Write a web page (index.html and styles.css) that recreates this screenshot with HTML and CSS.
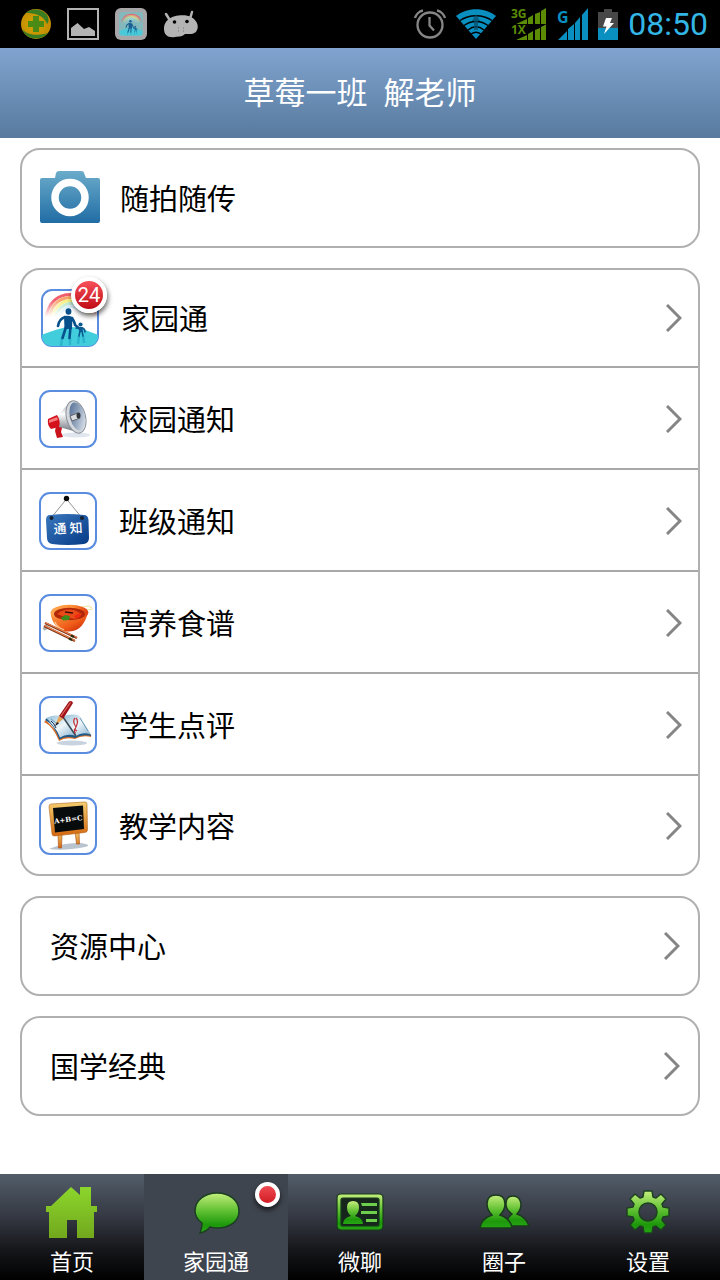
FILE: index.html
```html
<!DOCTYPE html>
<html lang="zh-CN">
<head>
<meta charset="utf-8">
<meta name="viewport" content="width=device-width, initial-scale=1">
<title>家园通</title>
<link rel="stylesheet" href="styles.css">
</head>
<body>
<svg class="defs" aria-hidden="true">
  <defs>
    <linearGradient id="green" x1="0" y1="0" x2="0" y2="1"><stop offset="0" stop-color="#c4ee7c"/><stop offset=".45" stop-color="#5fc032"/><stop offset=".8" stop-color="#1d980b"/><stop offset="1" stop-color="#27a514"/></linearGradient>
    <linearGradient id="house" x1="0" y1="0" x2="0" y2="1"><stop offset="0" stop-color="#8cd62c"/><stop offset="1" stop-color="#72a81d"/></linearGradient>
    <linearGradient id="camera" x1="0" y1="0" x2="0" y2="1"><stop offset="0" stop-color="#6bacca"/><stop offset="1" stop-color="#206ca5"/></linearGradient>
    <linearGradient id="fade" x1="0" y1="0" x2="0" y2="1"><stop offset="0" stop-color="#fff"/><stop offset=".4" stop-color="#fff"/><stop offset="1" stop-color="#000"/></linearGradient>
    <linearGradient id="board" x1="0" y1="0" x2="1" y2="1"><stop offset="0" stop-color="#3a78be"/><stop offset="1" stop-color="#063a86"/></linearGradient>
    <linearGradient id="bowl" x1="0" y1="0" x2="1" y2="1"><stop offset="0" stop-color="#ffa04a"/><stop offset=".6" stop-color="#ef5b18"/><stop offset="1" stop-color="#c01c04"/></linearGradient>
    <linearGradient id="rim" x1="0" y1="0" x2="1" y2="0"><stop offset="0" stop-color="#ffa850"/><stop offset=".6" stop-color="#ff8c34"/><stop offset="1" stop-color="#e03c10"/></linearGradient>
    <linearGradient id="horn" x1="0" y1="0" x2="1" y2="1"><stop offset="0" stop-color="#4a6690"/><stop offset=".5" stop-color="#93a5bd"/><stop offset="1" stop-color="#f2f5f8"/></linearGradient>
    <linearGradient id="cone" x1="0" y1="0" x2="0" y2="1"><stop offset="0" stop-color="#9aa0a8"/><stop offset=".4" stop-color="#fff"/><stop offset="1" stop-color="#6d747e"/></linearGradient>
    <linearGradient id="page" x1="0" y1="0" x2="1" y2="1"><stop offset="0" stop-color="#8fbcd6"/><stop offset=".5" stop-color="#eef6fa"/><stop offset="1" stop-color="#86b0ce"/></linearGradient>
    <linearGradient id="wood" x1="0" y1="0" x2="0" y2="1"><stop offset="0" stop-color="#f3cf70"/><stop offset="1" stop-color="#d3660f"/></linearGradient>
    <radialGradient id="ball" cx=".45" cy=".5" r=".55"><stop offset="0" stop-color="#d0a800"/><stop offset="1" stop-color="#c38a04"/></radialGradient>
    <mask id="rainbowMask"><rect width="58" height="28" fill="url(#fade)"/></mask>
    <clipPath id="tileClip"><rect x="1" y="1" width="56" height="56" rx="9"/></clipPath>
    <symbol id="family" viewBox="0 0 58 58">
      <g clip-path="url(#tileClip)">
        <g fill="none" stroke-width="3" mask="url(#rainbowMask)">
          <path d="M5 30C7 12 18 5 31 5.500S53 12 55 30" stroke="#f0606c"/>
          <path d="M8 30C10 15 20 8 31 8.500S50 15 52 30" stroke="#f9a66c"/>
          <path d="M11 30C13 18 22 11 31 11.500S47 18 49 30" stroke="#f5ef7c"/>
          <path d="M14 30C16 21 23 14 31 14.500S44 21 46 30" stroke="#b4e4c4"/>
          <path d="M17 30C19 24 25 17 31 17.500S41 24 43 30" stroke="#c0e3f8"/>
        </g>
        <path d="M0 46C9 43 20 38 30 38S48 43 58 46V58H0Z" fill="#42cddd"/>
        <path d="M21 49L20 57M29 49L29 56M38 47L37 55M42 47L43 54" stroke="#1fa6c4" stroke-width="2.500" opacity=".6"/>
        <ellipse cx="27.500" cy="22.500" rx="2.900" ry="3.300" fill="#07508c"/>
        <path d="M23 27Q27.500 26 31.500 28L31 40H23.500Z" fill="#07508c"/>
        <path d="M24 28Q18 30 17 37M31 29Q34 34 34 36L39 40M25 38L21.500 49M29.500 38L28.500 49" fill="none" stroke="#07508c" stroke-width="2.600" stroke-linecap="round"/>
        <circle cx="39.500" cy="35.500" r="2.100" fill="#0a5a92"/>
        <path d="M38 38H42L41.500 43H38.500Z" fill="#0a5a92"/>
        <path d="M38.500 39.500L35 39M41.500 39Q44 40 44 43M39 42L38 47M41 42L42 47" fill="none" stroke="#0a5a92" stroke-width="1.600" stroke-linecap="round"/>
      </g>
    </symbol>
  </defs>
</svg>

<div class="statusbar">
  <div class="notices">
    <svg width="32" height="32" viewBox="0 0 32 32" aria-hidden="true"><circle cx="16" cy="16" r="15" fill="url(#ball)"/><path d="M6 5C12 -1 23 1 27 7 29 10 29 14 27 16 24 7 14 5 6 5ZM2 21C9 29 20 27 28 25 21 33 7 33 2 21Z" fill="#397c22"/><path d="M13 8h6v5h5v6h-5v5h-6v-5H8v-6h5z" fill="#4c8a16"/></svg>
    <svg width="32" height="32" viewBox="0 0 32 32" aria-hidden="true"><path d="M1 1H31V31H1Z" fill="none" stroke="#b4b4b4" stroke-width="2"/><path d="M4 28V20L10.500 15 17 21 22 19 28 23V28Z" fill="#b4b4b4"/></svg>
    <svg width="34" height="34" viewBox="0 0 34 34" aria-hidden="true"><rect x="1" y="1" width="32" height="32" rx="6" fill="#a7a7a9"/><rect x="5" y="5" width="24" height="24" rx="2" fill="#83b8bd"/><use href="#family" x="5" y="5" width="24" height="24" opacity=".85"/></svg>
    <svg width="36" height="28" viewBox="0 0 36 28" aria-hidden="true"><path d="M3 4L8 12M29 2L27 9" stroke="#b4b4b4" stroke-width="2.500" stroke-linecap="round"/><path d="M6 9C10 5 23 4 28 7 34 10 36 16 34 20 32 25 26 24 22 24 18 28 14 26 12 27 5 28 1 25 1 19 1 14 3 11 6 9Z" fill="#b4b4b4"/><circle cx="11.500" cy="12" r="1.800"/><circle cx="24" cy="11.500" r="1.800"/><path d="M15 18h1m4 0h1m-6 3h1m4 0h1" stroke="#777"/></svg>
  </div>
  <div class="signals">
    <svg width="32" height="30" viewBox="0 0 32 30" aria-hidden="true" fill="none" stroke="#868686" stroke-width="2.300"><circle cx="16" cy="16" r="12.500"/><path d="M15.500 8V16.500L20 21.500M1 9C2 6 5 2 9 1.500M31 9C30 6 27 2 23 1.500"/></svg>
    <svg width="40" height="30" viewBox="0 0 40 30" aria-hidden="true"><path d="M20 30L0 7C11-2 29-2 40 7Z" fill="#098fc0"/><path d="M4 11.500C13 5 27 5 36 11.500M8 16.500C15 11 25 11 32 16.500M12 21C17 17 23 17 28 21M15 25C18 23 22 23 25 25" fill="none" stroke="#000" stroke-width="1.500"/><path d="M20 5l4 7h-2v9h-4v-9h-2z" fill="#07506c" opacity=".75"/></svg>
    <svg class="dual" width="36" height="34" viewBox="0 0 36 34" aria-hidden="true" fill="#5c8c05"><path d="M5 17L16 12V17ZM17 11L22 8V17H17ZM24 7L29 5V17H24ZM30 4L35 1V17H30ZM5 33L16 28V33ZM17 27L22 24V33H17ZM24 23L29 21V33H24ZM30 20L35 17.500V33H30Z"/><text x="0" y="11">3G</text><text x="0" y="27">1X</text></svg>
    <svg class="single" width="31" height="34" viewBox="0 0 31 34" aria-hidden="true" fill="#098fc0"><path d="M1 33L10 24V33ZM11 22L17 17V33H11ZM18 16L23 10V33H18ZM25 8L31 1V33H25Z"/><text x="0" y="16">G</text></svg>
    <svg width="20" height="32" viewBox="0 0 20 32" aria-hidden="true"><path d="M6 1H14V4H20V20H0V4H6Z" fill="#484848"/><path d="M0 20H20V32H0Z" fill="#098fc0"/><path d="M8 10H14L12 15H16L6 26 8.500 18.500H5Z" fill="#fff"/></svg>
    <time class="clock">08:50</time>
  </div>
</div>

<header class="titlebar"><h1>草莓一班&nbsp; 解老师</h1></header>

<main class="content">
  <button class="card row" type="button">
    <svg class="camera" width="60" height="54" viewBox="0 0 60 54" aria-hidden="true"><path d="M2 7H15L16 2Q17 0 19 0H41Q44 0 44 2L46 7H58Q60 7 60 9V50Q60 52 58 52H2Q0 52 0 50V9Q0 7 2 7Z" fill="url(#camera)"/><circle cx="30" cy="26.500" r="15" fill="none" stroke="#fff" stroke-width="7.500"/></svg>
    <span class="label">随拍随传</span>
  </button>

  <nav class="card group" aria-label="功能">
    <a class="row" href="#home-link">
      <span class="tile"><svg viewBox="0 0 58 58" aria-hidden="true"><use href="#family"/></svg><span class="badge">24</span></span>
      <span class="label">家园通</span><svg class="chevron" viewBox="0 0 16 28" aria-hidden="true"><path d="M1 1L14 14 1 27"/></svg>
    </a>
    <a class="row" href="#school">
      <span class="tile"><svg viewBox="0 0 58 58" aria-hidden="true">
        <ellipse cx="37" cy="45" rx="14" ry="2.500" fill="#dfe6ee"/>
        <path d="M17 36L24 34 22 42 24 47 18 48 16 41Z" fill="#c9121c"/>
        <path d="M18 26L31 12 38 42 20 37Z" fill="url(#cone)"/>
        <path d="M9 29L18 25Q22 31 20 37L12 39Q8 35 9 29Z" fill="#d3101b"/><path d="M10 30L18 27 19 30 10 33Z" fill="#f67a7a"/>
        <g transform="rotate(-14 37 27)"><ellipse cx="37" cy="27" rx="9.500" ry="16.500" fill="#d4d8dd" stroke="#8c939c"/><ellipse cx="38.500" cy="27" rx="7.500" ry="14.500" fill="url(#horn)"/></g>
        <path d="M31 26L39 23 41 28 33 31Z" fill="#d9dde2" stroke="#444" stroke-width=".7"/><ellipse cx="39.500" cy="25.500" rx="2" ry="3" fill="#30343b"/>
      </svg></span>
      <span class="label">校园通知</span><svg class="chevron" viewBox="0 0 16 28" aria-hidden="true"><path d="M1 1L14 14 1 27"/></svg>
    </a>
    <a class="row" href="#class">
      <span class="tile"><svg class="sign" viewBox="0 0 58 58" aria-hidden="true">
        <path d="M12 26L27.500 7 43 26" fill="none" stroke="#777" stroke-width=".8"/><circle cx="27.500" cy="6.500" r="2.700" fill="#080808"/>
        <path d="M11 23Q28 21 45 23 49 23 49.500 28L50 46Q50 51 45 52 28 54 13 52 8 51 8 46L7 28Q7 23 11 23Z" fill="url(#board)"/>
        <circle cx="12.500" cy="26" r="2" fill="#17202c"/><circle cx="43" cy="26" r="2" fill="#17202c"/>
        <text x="29" y="41" text-anchor="middle" transform="rotate(-3 29 36)">通 知</text>
      </svg></span>
      <span class="label">班级通知</span><svg class="chevron" viewBox="0 0 16 28" aria-hidden="true"><path d="M1 1L14 14 1 27"/></svg>
    </a>
    <a class="row" href="#menu">
      <span class="tile"><svg viewBox="0 0 58 58" aria-hidden="true">
        <path d="M42 13L50 12 53 14M46 16L54 15" fill="none" stroke="#efe6a8" stroke-width="1.200"/>
        <path d="M11.700 18C11.700 28 19 37.500 30 37.500S46 29 49.300 18Z" fill="url(#bowl)"/>
        <ellipse cx="30.500" cy="18.500" rx="18.800" ry="7.800" fill="url(#rim)"/><ellipse cx="30.500" cy="20" rx="15.500" ry="6.200" fill="#b02808"/>
        <path d="M18 20Q25 14 35 16L43 20 36 25 26 23Z" fill="#ea4a18"/><path d="M22 24L26 21 31 22 30 26 24 26.500Z" fill="#3f8a1c"/><path d="M35 22L41 19 42 22 37 25Z" fill="#f02a12"/><path d="M26 18L34 19" stroke="#3c1008" stroke-width="1.600"/>
        <path d="M16 28Q18 34 25 36" fill="none" stroke="#ffc48c" stroke-width="1.500"/>
        <path d="M4 35L8 31M5 36L10 33" stroke="#aaa" stroke-width="1.500"/>
        <path d="M6 29L38 44M5 32L36 47" stroke="#7a3414" stroke-width="2.400"/><path d="M6 28.500L38 43.500M5 31.500L36 46.500" stroke="#f08050" stroke-width="1.300"/><path d="M32 41.500L35 43M30 44.500L33 46" stroke="#26300e" stroke-width="2.300"/>
      </svg></span>
      <span class="label">营养食谱</span><svg class="chevron" viewBox="0 0 16 28" aria-hidden="true"><path d="M1 1L14 14 1 27"/></svg>
    </a>
    <a class="row" href="#review">
      <span class="tile"><svg viewBox="0 0 58 58" aria-hidden="true">
        <ellipse cx="33" cy="47" rx="15" ry="2.500" fill="#c7d3df"/>
        <path d="M5 26Q14 30 20 45 26 41 36 43 43 39 52 41V38L20 38 7 24Z" fill="#d9702c"/>
        <path d="M6 24Q15 28 20.500 43.500 27 39.500 36 42 43 38 52.500 40L49 35 20 37 8 22Z" fill="#1d5a88"/>
        <path d="M7 22Q16 18 24 20.500L37 40Q28 37 21 41.500 16 29 7 22Z" fill="url(#page)"/><path d="M24 20.500Q33 17 41 20L52 38.500Q43 35.500 37 40Z" fill="url(#page)"/>
        <path d="M24 21L37 40" stroke="#3a4a58" stroke-width="1.500"/><path d="M12 23L18 28M41 22L49 35" stroke="#6a98b4"/>
        <path d="M36 22Q33 25 37 31M37 22Q40 25 37 31T37 37M35 33L38 35" stroke="#c43038" stroke-width="1.200" fill="none"/>
        <path d="M20 20L30 5.500Q33 4 34 7L24 23Z" fill="#9c1218"/><path d="M22 20L31.500 6.500" stroke="#e56a60" stroke-width="1.200"/><path d="M20 20L24 23 16 30Z" fill="#e8a254"/><path d="M18 26L16 30 20 27.500Z" fill="#18202b"/><path d="M12 25Q15 27 17 32" stroke="#18305b" fill="none"/>
      </svg></span>
      <span class="label">学生点评</span><svg class="chevron" viewBox="0 0 16 28" aria-hidden="true"><path d="M1 1L14 14 1 27"/></svg>
    </a>
    <a class="row" href="#lesson">
      <span class="tile"><svg class="blackboard" viewBox="0 0 58 58" aria-hidden="true">
        <path d="M10 52Q25 45 42 46 54 48 46 50 25 54 10 52Z" fill="#b9c4ce"/>
        <path d="M19 37H23L22.500 51H19.500ZM36 34H40L40.500 47H37.500Z" fill="url(#wood)" stroke="#a84c12" stroke-width=".6"/>
        <path d="M12 7L46 5Q48 5 48 7L48.500 33Q48.500 35 46 35.500L16 39Q13 39 13 37L10 10Q10 7 12 7Z" fill="url(#wood)" stroke="#b4681c" stroke-width=".6"/>
        <path d="M14 11L44 8.500 45 32 16 35.500Z" fill="#080b0c"/>
        <text x="29.500" y="25" text-anchor="middle" transform="rotate(-7 29 24)">A+B=C</text>
      </svg></span>
      <span class="label">教学内容</span><svg class="chevron" viewBox="0 0 16 28" aria-hidden="true"><path d="M1 1L14 14 1 27"/></svg>
    </a>
  </nav>

  <a class="card row plain" href="#resources"><span class="label">资源中心</span><svg class="chevron" viewBox="0 0 16 28" aria-hidden="true"><path d="M1 1L14 14 1 27"/></svg></a>
  <a class="card row plain" href="#classics"><span class="label">国学经典</span><svg class="chevron" viewBox="0 0 16 28" aria-hidden="true"><path d="M1 1L14 14 1 27"/></svg></a>
</main>

<nav class="tabs" aria-label="主导航">
  <a class="tab" href="#tab-home"><svg viewBox="0 0 56 56" aria-hidden="true"><path d="M27 3L36 11V3H47V22H53V28H50V54H33V36H23V54H5V28H2V22H7Z" fill="url(#house)"/></svg><span>首页</span></a>
  <a class="tab active" href="#tab-link" aria-current="page"><svg viewBox="0 0 56 56" aria-hidden="true"><path d="M29 9C41 9 51 16 51 27S41 44 29 44Q25 44 22 43 18 48 12 49 14 44 14 39 7 34 7 27C7 16 17 9 29 9Z" fill="url(#green)" stroke="#1c3f24" stroke-width="1.500"/></svg><span>家园通</span><i class="dot"></i></a>
  <a class="tab" href="#tab-chat"><svg viewBox="0 0 56 56" aria-hidden="true"><path d="M9 14H47V42H9Z" fill="#16261c"/><path fill-rule="evenodd" d="M9 10H47Q51 10 51 14V42Q51 46 47 46H9Q5 46 5 42V14Q5 10 9 10ZM11 14Q9 14 9 16V40Q9 42 11 42H45Q47 42 47 40V16Q47 14 45 14Z" fill="url(#green)" stroke="#173a1b" stroke-width="1.200"/><path d="M11 40Q11 34 19 32 15 29 15 23 15 17 21 17T27 23Q27 29 23 32 31 34 31 40Z" fill="url(#green)"/><path d="M29 19H45V22H30ZM29 27H45V30H29ZM34 35H45V38H34Z" fill="#6dcd4c"/></svg><span>微聊</span></a>
  <a class="tab" href="#tab-circle"><svg viewBox="0 0 56 56" aria-hidden="true"><g fill="url(#green)" stroke="#193a1c" stroke-width="1.500"><path d="M29 41Q31 34 36 30 30 26 30 20 30 12 37 12T45 20Q45 26 41 30 50 33 53 42H29Z"/><path d="M4 44Q5 35 16 31 11 26 11 20 11 11 20 11T29 20Q29 26 24 31 35 35 36 44Z"/></g></svg><span>圈子</span></a>
  <a class="tab" href="#tab-settings"><svg viewBox="0 0 56 56" aria-hidden="true"><path fill-rule="evenodd" d="M24 7H32L33 13 36 14 41 10 46 15 42 20 43 23 49 24V32L43 33 42 36 46 41 41 46 36 42 33 43 32 49H24L23 43 20 42 15 46 10 41 14 36 13 33 7 32V24L13 23 14 20 10 15 15 10 20 14 23 13ZM28 19A9 9 0 1 0 28 37 9 9 0 1 0 28 19Z" fill="url(#green)" stroke="#1c4020" stroke-width="1.500" stroke-linejoin="round"/></svg><span>设置</span></a>
</nav>
</body>
</html>
```
FILE: styles.css
```css
* { box-sizing: border-box; }

body {
  margin: 0;
  min-height: 100vh;
  display: flex;
  flex-direction: column;
  background: #fff;
  color: #000;
  font-family: "Noto Sans", "Noto Sans CJK SC", sans-serif;
}

svg { display: block; flex: none; }
.defs { position: absolute; width: 0; height: 0; }
a { color: inherit; text-decoration: none; }

/* System status bar */
.statusbar {
  height: 48px;
  padding: 0 12px 0 20px;
  display: flex;
  align-items: center;
  justify-content: space-between;
  background: #000;
}
.notices, .signals { display: flex; align-items: center; }
.notices { gap: 15px; }
.signals { gap: 10px; }
.clock {
  font-family: Roboto, sans-serif;
  font-size: 32px;
  line-height: 48px;
  color: #33b5e5;
}
.dual, .single { overflow: visible; }
.dual { margin-left: 5px; }
.dual text { font: bold 12px "Open Sans", sans-serif; }
.single text { font: bold 16px "Open Sans", sans-serif; }

/* Title */
.titlebar {
  height: 90px;
  padding-bottom: 2px;
  display: flex;
  align-items: center;
  justify-content: center;
  background: linear-gradient(#80a4cf, #587a9f);
}
.titlebar h1 {
  margin: 0;
  font-size: 31px;
  line-height: 40px;
  font-weight: 400;
  color: #fff;
}

/* Cards */
.content {
  flex: 1;
  padding: 10px 20px 20px;
  display: flex;
  flex-direction: column;
  gap: 20px;
}
.card {
  border: 2px solid #b0b0b0;
  border-radius: 20px;
  background: #fff;
}
.row {
  min-height: 100px;
  padding: 0 16px 0 18px;
  display: flex;
  align-items: center;
  gap: 22px;
}
button.row {
  gap: 20px;
  font: inherit;
  color: inherit;
  text-align: left;
}
.label {
  flex: 1;
  padding-top: 2px;
  font-size: 29px;
  line-height: 40px;
}
.plain { padding: 0 18px 0 28px; }
.group .row {
  min-height: 102px;
  padding-top: 2px;
  padding-left: 17px;
  border-top: 2px solid #a8a8a8;
}
.group .row:first-child {
  min-height: 96px;
  padding-top: 0;
  padding-left: 19px;
  border-top: 0;
}
.group .row:last-child { min-height: 100px; }

.tile {
  position: relative;
  width: 58px;
  height: 58px;
  border: 2px solid #5a8ce0;
  border-radius: 11px;
}
.tile svg { width: 58px; height: 58px; margin: -2px; }
.sign text {
  font: 500 13px "Noto Sans CJK SC", sans-serif;
  fill: #fff;
}
.blackboard text {
  font: bold 7px "DejaVu Serif", serif;
  fill: #fff;
}
.badge {
  position: absolute;
  top: -14px;
  right: -10px;
  width: 36px;
  height: 36px;
  border: 4px solid #fff;
  border-radius: 50%;
  background: linear-gradient(#f7505a, #c00c14);
  box-shadow: 1px 3px 5px #0009;
  color: #fff;
  font: 20px/28px Roboto, sans-serif;
  text-align: center;
}
.chevron {
  width: 16px;
  height: 28px;
  fill: none;
  stroke: #858585;
  stroke-width: 3;
}

/* Bottom tabs */
.tabs {
  height: 106px;
  display: grid;
  grid-template-columns: repeat(5, 1fr);
  background: linear-gradient(#525d69, #353943 40%, #17181c 70%, #000);
}
.tab {
  position: relative;
  padding-top: 10px;
  display: flex;
  flex-direction: column;
  align-items: center;
  gap: 5px;
  color: #fff;
  font-size: 22px;
  line-height: 32px;
}
.tab svg { width: 56px; height: 56px; }
.tab.active { background: #3f454f; }
.dot {
  position: absolute;
  top: 8px;
  right: 8px;
  width: 25px;
  height: 25px;
  border: 4px solid #fff;
  border-radius: 50%;
  background: linear-gradient(#f04a52, #d01c24);
  box-shadow: 0 3px 5px #000a;
}
```
